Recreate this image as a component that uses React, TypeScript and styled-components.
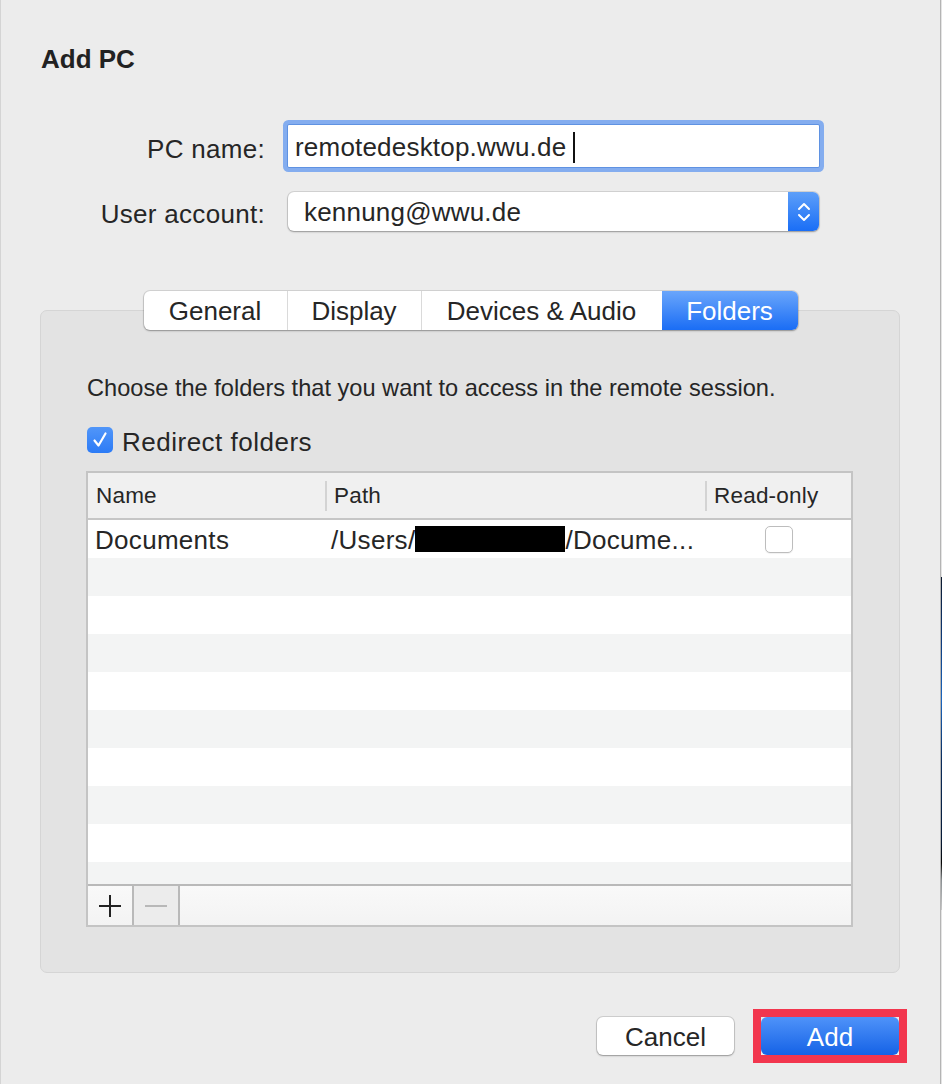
import React from "react";
import styled, { createGlobalStyle } from "styled-components";

const GlobalStyle = createGlobalStyle`
  html, body { margin: 0; padding: 0; background: #ececec; }
  body {
    font-family: "Liberation Sans", Arial, Helvetica, sans-serif;
    color: #262626;
    -webkit-font-smoothing: antialiased;
  }
  * { box-sizing: border-box; }
`;

const Screen = styled.div`
  display: flex;
  width: 942px;
  height: 1084px;
  overflow: hidden;
`;

const Window = styled.div`
  width: 941px;
  height: 1084px;
  flex: none;
  background: #ececec;
  border-left: 1px solid #d4d4d4;
  border-right: 1px solid #b4b4b4;
  display: flex;
  flex-direction: column;
`;

const DesktopEdge = styled.div`
  width: 1px;
  height: 1084px;
  flex: none;
  background: linear-gradient(
    to bottom,
    #e4e4e4 0,
    #e4e4e4 577px,
    #0c1a2e 577px,
    #0d3a7a 640px,
    #1a66c0 700px,
    #0a2c5c 760px,
    #061a36 840px,
    #050505 863px,
    #8a8f92 880px,
    #c9c9c9 910px,
    #e4e4e4 910px
  );
`;

const Title = styled.h1`
  margin: 44px 0 0 40px;
  font-size: 26px;
  line-height: 30px;
  font-weight: bold;
  color: #222;
`;

const Form = styled.div`
  margin-top: 50px;
  display: grid;
  grid-template-columns: 264px 540px;
  column-gap: 22px;
  row-gap: 24px;
  align-items: center;
`;

const Label = styled.label`
  text-align: right;
  font-size: 26px;
  line-height: 30px;
  padding-top: 5px;
  letter-spacing: 0.3px;
`;

const TextField = styled.div`
  width: 533px;
  height: 44px;
  background: #fff;
  border: 1px solid #5f92e2;
  border-radius: 2px;
  box-shadow: 0 0 0 4px #84adef;
  display: flex;
  align-items: center;
  padding-left: 7px;
  padding-top: 2px;
  font-size: 26px;
  letter-spacing: 0.2px;
  white-space: nowrap;
`;

const Caret = styled.span`
  display: inline-block;
  width: 2px;
  height: 31px;
  background: #111;
  margin-left: 7px;
`;

const Popup = styled.div`
  width: 531px;
  height: 39px;
  margin-left: 1px;
  background: #fff;
  border-radius: 6px;
  box-shadow: 0 0 0 1px rgba(0, 0, 0, 0.1), 0 1px 2px rgba(0, 0, 0, 0.3);
  display: flex;
  align-items: stretch;
`;

const PopupValue = styled.span`
  flex: 1;
  display: flex;
  align-items: center;
  padding-left: 16px;
  padding-top: 2px;
  font-size: 26px;
  letter-spacing: 0.2px;
`;

const Stepper = styled.span`
  width: 31px;
  border-radius: 0 6px 6px 0;
  background: linear-gradient(to bottom, #5d9ff9, #1a6ef6);
  display: flex;
  align-items: center;
  justify-content: center;
`;

const Tabs = styled.div`
  margin-top: 60px;
  margin-bottom: -20px;
  align-self: center;
  display: flex;
  height: 39px;
  background: #fff;
  border-radius: 6px;
  box-shadow: 0 0 0 1px rgba(0, 0, 0, 0.1), 0 1px 2px rgba(0, 0, 0, 0.3);
  overflow: hidden;
  position: relative;
  z-index: 1;
`;

const Tab = styled.div<{ $w: number; $active?: boolean; $first?: boolean }>`
  width: ${(p) => p.$w}px;
  display: flex;
  align-items: center;
  justify-content: center;
  padding-top: 2px;
  font-size: 26px;
  border-left: ${(p) => (p.$first || p.$active ? "none" : "1px solid #dadada")};
  color: ${(p) => (p.$active ? "#fff" : "#262626")};
  background: ${(p) =>
    p.$active ? "linear-gradient(to bottom, #6aa6fb, #1a6df5)" : "transparent"};
`;

const Panel = styled.div`
  margin-left: 39px;
  width: 860px;
  background: #e3e3e3;
  border: 1px solid #d5d5d5;
  border-radius: 7px;
  padding: 63px 46px 45px 45px;
  display: flex;
  flex-direction: column;
`;

const Intro = styled.p`
  margin: 0;
  font-size: 23.6px;
  line-height: 28px;
  padding-left: 1px;
`;

const CheckRow = styled.div`
  margin-top: 24px;
  height: 28px;
  display: flex;
  align-items: center;
  gap: 9px;
  padding-left: 1px;
  font-size: 26px;
  letter-spacing: 0.5px;
`;

const CheckText = styled.span`
  padding-top: 4px;
`;

const BlueCheck = styled.span`
  width: 26px;
  height: 26px;
  border-radius: 5px;
  background: linear-gradient(to bottom, #5196f9, #2c7bf6);
  display: flex;
  align-items: center;
  justify-content: center;
`;

const Table = styled.div`
  margin-top: 17px;
  width: 767px;
  border: 2px solid #c4c4c4;
  background: #fff;
  display: flex;
  flex-direction: column;
`;

const HeaderRow = styled.div`
  display: grid;
  grid-template-columns: 237px 380px 146px;
  height: 47px;
  background: #f0f0f0;
  border-bottom: 2px solid #c6c6c6;
  align-items: stretch;
`;

const HeaderCell = styled.div<{ $sep?: boolean; $pad: number }>`
  display: flex;
  align-items: center;
  padding-left: ${(p) => p.$pad}px;
  font-size: 22.5px;
  letter-spacing: 0.2px;
  background: ${(p) =>
    p.$sep
      ? "linear-gradient(#d3d3d3, #d3d3d3) left center / 2px 30px no-repeat"
      : "none"};
`;

const Rows = styled.div`
  height: 364px;
  overflow: hidden;
`;

const Row = styled.div<{ $alt: boolean }>`
  display: grid;
  grid-template-columns: 237px 380px 146px;
  height: 38px;
  background: ${(p) => (p.$alt ? "#f3f4f4" : "#fff")};
`;

const Cell = styled.div<{ $pad?: number; $center?: boolean }>`
  display: flex;
  align-items: center;
  justify-content: ${(p) => (p.$center ? "center" : "flex-start")};
  padding-left: ${(p) => p.$pad ?? 0}px;
  padding-top: ${(p) => (p.$center ? 0 : 3)}px;
  font-size: 26px;
  letter-spacing: 0.3px;
  white-space: nowrap;
  min-width: 0;
`;

const Redacted = styled.span`
  display: inline-block;
  flex: none;
  width: 150px;
  height: 26px;
  margin-top: -3px;
  background: #000;
`;

const SmallCheck = styled.span`
  width: 28px;
  height: 27px;
  background: #fff;
  border: 1px solid #bdbdbd;
  border-radius: 5px;
  box-shadow: 0 1px 1px rgba(0, 0, 0, 0.06);
  margin-left: 1px;
`;

const Bar = styled.div`
  height: 41px;
  border-top: 2px solid #b9b9b9;
  background: linear-gradient(to bottom, #f9f9f9, #f3f3f3);
  display: flex;
`;

const BarButton = styled.div<{ $disabled?: boolean }>`
  width: 46px;
  border-right: 2px solid #b9b9b9;
  background: ${(p) => (p.$disabled ? "#ececec" : "transparent")};
  display: flex;
  align-items: center;
  justify-content: center;
`;

const Footer = styled.div`
  margin-top: 36px;
  padding-right: 33px;
  display: flex;
  justify-content: flex-end;
  align-items: center;
`;

const CancelButton = styled.div`
  width: 137px;
  height: 38px;
  margin-right: 19px;
  background: #fff;
  border-radius: 6px;
  box-shadow: 0 0 0 1px rgba(0, 0, 0, 0.12), 0 1px 2px rgba(0, 0, 0, 0.28);
  display: flex;
  align-items: center;
  justify-content: center;
  padding-top: 2px;
  font-size: 26px;
`;

const Highlight = styled.div`
  border: 8px solid #f2364e;
  display: flex;
`;

const AddButton = styled.div`
  width: 138px;
  height: 38px;
  border-radius: 6px;
  background: linear-gradient(to bottom, #4f93f9, #1562e6);
  color: #fff;
  display: flex;
  align-items: center;
  justify-content: center;
  padding-top: 2px;
  font-size: 26px;
`;

const ROWS = Array.from({ length: 10 }, (_, i) => i);

export default function App() {
  return (
    <>
      <GlobalStyle />
      <Screen>
        <Window>
          <Title>Add PC</Title>
          <Form>
            <Label>PC name:</Label>
            <TextField>
              remotedesktop.wwu.de
              <Caret />
            </TextField>
            <Label>User account:</Label>
            <Popup>
              <PopupValue>kennung@wwu.de</PopupValue>
              <Stepper>
                <svg width="14" height="28" viewBox="0 0 14 28" fill="none">
                  <path d="M2 11 L7 6 L12 11" stroke="#fff" strokeWidth="2" strokeLinecap="round" strokeLinejoin="round" />
                  <path d="M2 17 L7 22 L12 17" stroke="#fff" strokeWidth="2" strokeLinecap="round" strokeLinejoin="round" />
                </svg>
              </Stepper>
            </Popup>
          </Form>

          <Tabs>
            <Tab $w={143} $first>General</Tab>
            <Tab $w={134}>Display</Tab>
            <Tab $w={241}>Devices &amp; Audio</Tab>
            <Tab $w={136} $active>Folders</Tab>
          </Tabs>

          <Panel>
            <Intro>Choose the folders that you want to access in the remote session.</Intro>
            <CheckRow>
              <BlueCheck>
                <svg width="18" height="18" viewBox="0 0 18 18" fill="none">
                  <path d="M3.5 9.5 L7.5 14.5 L14.5 2.5" stroke="#fff" strokeWidth="2.2" strokeLinecap="round" strokeLinejoin="round" />
                </svg>
              </BlueCheck>
              <CheckText>Redirect folders</CheckText>
            </CheckRow>
            <Table>
              <HeaderRow>
                <HeaderCell $pad={8}>Name</HeaderCell>
                <HeaderCell $pad={9} $sep>Path</HeaderCell>
                <HeaderCell $pad={9} $sep>Read-only</HeaderCell>
              </HeaderRow>
              <Rows>
                {ROWS.map((i) =>
                  i === 0 ? (
                    <Row key={i} $alt={false}>
                      <Cell $pad={7}>Documents</Cell>
                      <Cell $pad={6}>
                        /Users/
                        <Redacted />
                        /Docume...
                      </Cell>
                      <Cell $center>
                        <SmallCheck />
                      </Cell>
                    </Row>
                  ) : (
                    <Row key={i} $alt={i % 2 === 1} />
                  )
                )}
              </Rows>
              <Bar>
                <BarButton>
                  <svg width="24" height="24" viewBox="0 0 24 24">
                    <path d="M12 1 V23 M1 12 H23" stroke="#222" strokeWidth="2" />
                  </svg>
                </BarButton>
                <BarButton $disabled>
                  <svg width="24" height="24" viewBox="0 0 24 24">
                    <path d="M1 12 H23" stroke="#b8b8b8" strokeWidth="2" />
                  </svg>
                </BarButton>
              </Bar>
            </Table>
          </Panel>

          <Footer>
            <CancelButton>Cancel</CancelButton>
            <Highlight>
              <AddButton>Add</AddButton>
            </Highlight>
          </Footer>
        </Window>
        <DesktopEdge />
      </Screen>
    </>
  );
}
